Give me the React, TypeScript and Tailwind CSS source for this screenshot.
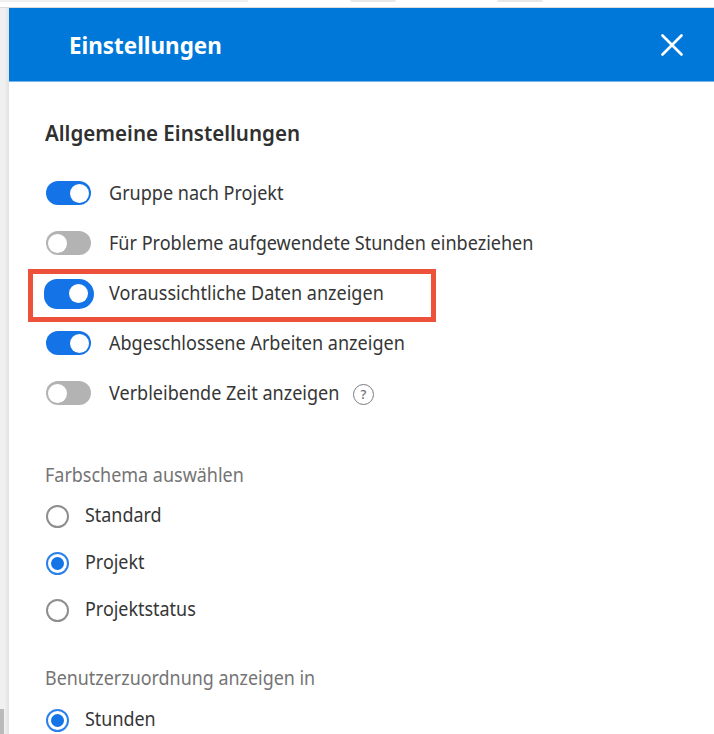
import type { ReactNode } from "react";

function Label({ children, className = "scale-x-[0.902] text-[#363636]" }: { children: ReactNode; className?: string }) {
  return (
    <span className={`block origin-left whitespace-nowrap text-[20px] leading-[28px] ${className}`}>
      {children}
    </span>
  );
}

function Toggle({ on, large }: { on: boolean; large?: boolean }) {
  if (large) {
    return (
      <span className="-ml-0.5 -mr-[3px] mt-px flex h-[30px] w-[50px] shrink-0 items-center justify-end rounded-l-[13px] rounded-r-[15px] bg-[#1473e6] pr-[6px]">
        <span className="size-[19px] rounded-full bg-white" />
      </span>
    );
  }
  return (
    <span
      className={`flex h-6 w-[45px] shrink-0 items-center rounded-full px-[2px] ${on ? "justify-end bg-[#1473e6]" : "justify-start bg-[#b3b3b3]"}`}
    >
      <span className="size-[19px] rounded-full bg-white" />
    </span>
  );
}

function Radio({ checked }: { checked?: boolean }) {
  return (
    <span
      className={`mt-[3px] flex size-[23px] shrink-0 items-center justify-center rounded-full border-2 bg-white ${checked ? "border-[#2c80ec]" : "border-[#8e8e8e]"}`}
    >
      {checked && <span className="size-[13px] rounded-full bg-[#1473e6]" />}
    </span>
  );
}

function RadioRow({ label, checked }: { label: string; checked?: boolean }) {
  return (
    <div className="flex h-7 gap-4 pl-px">
      <Radio checked={checked} />
      <Label className="-mt-px scale-x-[0.896] text-[#363636]">{label}</Label>
    </div>
  );
}

const settings = [
  { label: "Gruppe nach Projekt", on: true },
  { label: "Für Probleme aufgewendete Stunden einbeziehen", on: false },
  { label: "Voraussichtliche Daten anzeigen", on: true, large: true },
  { label: "Abgeschlossene Arbeiten anzeigen", on: true },
  { label: "Verbleibende Zeit anzeigen", on: false, help: true },
];

export default function App() {
  return (
    <div className="relative flex h-[734px] w-[714px] flex-col overflow-hidden bg-white font-['Noto_Sans',sans-serif]">
      <div className="flex h-2 shrink-0 items-start border-b border-[#d9dcde] bg-white">
        <div className="h-[2px] w-[248px] bg-[#f0f0f0]" />
        <div className="ml-[102px] h-[2px] w-[46px] rounded-b bg-[#e8e8e8]" />
        <div className="ml-[101px] h-[2px] w-[46px] rounded-b bg-[#e8e8e8]" />
      </div>
      <div className="flex grow">
        <div className="flex w-[9px] shrink-0 flex-col justify-end bg-linear-to-r from-[#f0f0f0] from-50% to-[#dfe1e3]">
          <div className="h-[25px] w-1 bg-[#bababa]" />
        </div>
        <main className="flex grow flex-col">
          <header className="flex h-[74px] items-center justify-between border-b border-[#75b5ea] bg-[#0078d9] pl-[60px] pr-[31px]">
            <h1 className="origin-left scale-x-[0.934] text-[24px] font-bold leading-8 text-white">Einstellungen</h1>
            <svg className="mt-px size-[22px]" viewBox="0 0 22 22" fill="none" stroke="white" strokeWidth="2.6" strokeLinecap="round">
              <path d="M1.5 1.5l19 19M20.5 1.5l-19 19" />
            </svg>
          </header>
          <section className="pl-9">
            <h2 className="mt-[34px] origin-left scale-x-[0.934] text-[22px] font-semibold leading-8 text-[#303030]">Allgemeine Einstellungen</h2>
            <div className="mt-[20px]">
              {settings.map((s) => (
                <div key={s.label} className="flex h-[50px] items-center pl-px">
                  <Toggle on={s.on} large={s.large} />
                  <div className="ml-[18px] w-[230px]">
                    <Label>{s.label}</Label>
                  </div>
                  {s.help && (
                    <span className="ml-[14px] mt-[3px] flex size-[21px] items-center justify-center rounded-full border-[1.5px] border-[#7b7b82] text-[13px] font-medium leading-none text-[#6e6e76]">
                      ?
                    </span>
                  )}
                </div>
              ))}
            </div>
            <div className="mt-[43px]">
              <Label className="scale-x-[0.898] text-[#747474]">Farbschema auswählen</Label>
            </div>
            <div className="mt-[13px] flex flex-col gap-[19px]">
              <RadioRow label="Standard" />
              <RadioRow label="Projekt" checked />
              <RadioRow label="Projektstatus" />
            </div>
            <div className="mt-[40px]">
              <Label className="scale-x-[0.895] text-[#747474]">Benutzerzuordnung anzeigen in</Label>
            </div>
            <div className="mt-[14px]">
              <RadioRow label="Stunden" checked />
            </div>
          </section>
        </main>
      </div>
      <div className="pointer-events-none absolute left-[28px] top-[269px] h-[53px] w-[408px] border-[5px] border-[#ed513b]" />
    </div>
  );
}
